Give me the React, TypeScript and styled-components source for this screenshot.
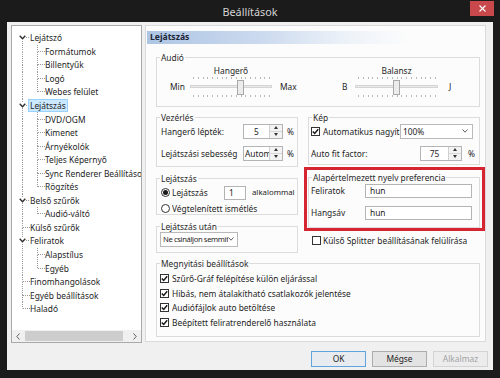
import React from 'react';
import styled, { createGlobalStyle, css } from 'styled-components';

const Global = createGlobalStyle`
  html, body { margin: 0; padding: 0; background: #1b1b1b; }
  #root { width: 500px; height: 378px; }
`;

const FONT = `"Noto Sans", "Open Sans", "DejaVu Sans", sans-serif`;

const Window = styled.div`
  width: 500px;
  height: 378px;
  background: #1b1b1b;
  display: flex;
  flex-direction: column;
  overflow: hidden;
  font-family: ${FONT};
  font-size: 8.4px;
  color: #1e1e1e;
`;

const TitleBar = styled.div`
  height: 22px;
  flex: none;
  display: grid;
  grid-template-columns: 1fr auto 1fr;
`;

const Title = styled.div`
  grid-column: 2;
  font-size: 10.8px;
  line-height: 22px;
  color: #d4d4d4;
  padding-top: 1px;
`;

const CloseBtn = styled.div`
  grid-column: 3;
  justify-self: end;
  margin: 1px 6px 0 0;
  width: 24px;
  height: 15px;
  background: #c9484b;
  color: #fff;
  display: flex;
  align-items: center;
  justify-content: center;
`;

const Body = styled.div`
  flex: none;
  height: 348px;
  margin: 0 7px;
  background: #f0f0f0;
  padding: 3px 7px 0 4px;
  box-sizing: border-box;
  display: flex;
  flex-direction: column;
`;

const Content = styled.div`
  display: flex;
  align-items: flex-start;
  gap: 3px;
`;

/* ---------- Tree ---------- */
const TreeBox = styled.div`
  width: 131px;
  height: 318px;
  flex: none;
  box-sizing: border-box;
  border: 1px solid #a9a9a9;
  background: #fff;
  display: flex;
  flex-direction: column;
  overflow: hidden;
`;

const TreeList = styled.div`
  flex: 1;
  padding: 5px 0 0 3px;
  overflow: hidden;
`;

const TreeRow = styled.div`
  display: flex;
  height: 13.55px;
  white-space: nowrap;
`;

const dotV = 'repeating-linear-gradient(to bottom, #9a9a9a 0 1px, transparent 1px 2px)';
const dotH = 'repeating-linear-gradient(to right, #9a9a9a 0 1px, transparent 1px 2px)';

type CellSpec = { t?: boolean; b?: boolean; h?: boolean; c?: boolean };

const Cell = styled.span<{ $t?: boolean; $b?: boolean; $h?: boolean; $c?: boolean }>`
  flex: none;
  width: 15px;
  display: flex;
  align-items: center;
  justify-content: center;
  background-repeat: no-repeat;
  ${({ $t, $b, $h, $c }) => {
    const imgs: string[] = [];
    const pos: string[] = [];
    const size: string[] = [];
    if ($t) { imgs.push(dotV); pos.push('7px 0'); size.push(`1px ${$c ? '3px' : '50%'}`); }
    if ($b) { imgs.push(dotV); pos.push('7px 100%'); size.push(`1px ${$c ? '4px' : '50%'}`); }
    if ($h) { imgs.push(dotH); pos.push(`${$c ? 11 : 8}px 50%`); size.push(`${$c ? 4 : 7}px 1px`); }
    if (!imgs.length) return css`background: none;`;
    return css`
      background-image: ${imgs.join(',')};
      background-position: ${pos.join(',')};
      background-size: ${size.join(',')};
    `;
  }}
`;

const TreeLabel = styled.span<{ $sel?: boolean }>`
  align-self: center;
  margin-left: -2px;
  padding: 0 1px;
  border: 1px solid transparent;
  line-height: 11px;
  ${({ $sel }) => $sel && css`
    background: #cce8ff;
    border-color: #99d1ff;
  `}
`;

const HScroll = styled.div`
  flex: none;
  height: 12px;
  display: flex;
  background: #f0f0f0;
`;

const ScrollArrow = styled.div`
  width: 12px;
  flex: none;
  display: flex;
  align-items: center;
  justify-content: center;
`;

const ScrollTrack = styled.div`
  flex: 1;
  display: flex;
  align-items: center;
`;

const ScrollThumb = styled.div`
  width: 98px;
  height: 10px;
  margin-left: 1px;
  background: #cdcdcd;
`;

const Chevron = () => (
  <svg width="7" height="5" viewBox="0 0 7 5">
    <polyline points="0.7,0.8 3.5,3.8 6.3,0.8" fill="none" stroke="#2a2a2a" strokeWidth="1.3" />
  </svg>
);

const F: CellSpec = { t: true, b: true };
const FH: CellSpec = { t: true, b: true, h: true };
const LH: CellSpec = { t: true, h: true };
const CT: CellSpec = { t: true, b: true, c: true, h: true };

const treeRows: { text: string; cells: CellSpec[]; sel?: boolean }[] = [
  { text: 'Lejátszó', cells: [{ b: true, c: true, h: true }] },
  { text: 'Formátumok', cells: [F, FH] },
  { text: 'Billentyűk', cells: [F, FH] },
  { text: 'Logó', cells: [F, FH] },
  { text: 'Webes felület', cells: [F, LH] },
  { text: 'Lejátszás', cells: [CT], sel: true },
  { text: 'DVD/OGM', cells: [F, FH] },
  { text: 'Kimenet', cells: [F, FH] },
  { text: 'Árnyékolók', cells: [F, FH] },
  { text: 'Teljes Képernyő', cells: [F, FH] },
  { text: 'Sync Renderer Beállítások', cells: [F, FH] },
  { text: 'Rögzítés', cells: [F, LH] },
  { text: 'Belső szűrők', cells: [CT] },
  { text: 'Audió-váltó', cells: [F, LH] },
  { text: 'Külső szűrők', cells: [FH] },
  { text: 'Feliratok', cells: [CT] },
  { text: 'Alapstílus', cells: [F, FH] },
  { text: 'Egyéb', cells: [F, LH] },
  { text: 'Finomhangolások', cells: [FH] },
  { text: 'Egyéb beállítások', cells: [FH] },
  { text: 'Haladó', cells: [LH] },
];

/* ---------- Right pane ---------- */
const Pane = styled.div`
  flex: 1;
  box-sizing: border-box;
  border: 1px solid #dadada;
  background: #fcfcfc;
  padding: 5px 5px 4px 10px;
`;

const Header = styled.div`
  height: 13px;
  margin: 0 -4px 0 -9px;
  padding-left: 3px;
  line-height: 13px;
  font-weight: bold;
  font-size: 8.6px;
  color: #1b2536;
  background: linear-gradient(to right, #adc5e4 0%, #cddbef 35%, #eef3f9 60%, #fcfcfc 78%);
`;

const Group = styled.div<{ $mt?: number; $pb?: number }>`
  border: 1px solid #dcdcdc;
  margin-top: ${({ $mt }) => $mt ?? 0}px;
  padding-bottom: ${({ $pb }) => $pb ?? 0}px;
`;

const Legend = styled.div`
  width: fit-content;
  margin: -5px 0 0 3px;
  padding: 0 1px;
  line-height: 10px;
  background: #fcfcfc;
  color: #2a2a2a;
`;

const SliderRow = styled.div`
  display: flex;
  padding-left: 13px;
  margin-top: 1.5px;
`;

const SliderUnit = styled.div<{ $l: number; $w: number; $r: number; $ml?: number }>`
  display: grid;
  grid-template-columns: ${({ $l, $w, $r }) => `${$l}px ${$w}px ${$r}px`};
  grid-template-rows: 11px 22px;
  margin-left: ${({ $ml }) => $ml ?? 0}px;
  align-items: center;
`;

const SliderTitle = styled.div`
  grid-column: 2;
  grid-row: 1;
  text-align: center;
  line-height: 11px;
`;

const SliderEnd = styled.div<{ $pl?: number }>`
  grid-row: 2;
  line-height: 11px;
  padding-left: ${({ $pl }) => $pl ?? 0}px;
`;

const Slider = ({ width, thumb }: { width: number; thumb: number }) => {
  const ticks = 17;
  return (
    <svg width={width} height={22} style={{ gridRow: 2, gridColumn: 2, display: 'block' }}>
      {Array.from({ length: ticks }).map((_, i) => {
        const x = Math.round(3 + (i * (width - 6)) / (ticks - 1)) + 0.5;
        return (
          <g key={i}>
            <line x1={x} x2={x} y1={1} y2={3} stroke="#b9b9b9" />
            <line x1={x} x2={x} y1={19} y2={21} stroke="#b9b9b9" />
          </g>
        );
      })}
      <rect x={0.5} y={9.5} width={width - 1} height={2} fill="#e9e9e9" stroke="#d5d5d5" />
      <rect x={thumb + 0.5} y={4.5} width={6} height={14} fill="#ececec" stroke="#a9a9a9" />
    </svg>
  );
};

const Columns = styled.div`
  display: grid;
  grid-template-columns: 142px 172px;
  column-gap: 10px;
  margin-top: 10px;
  align-items: start;
`;

const Column = styled.div`
  display: flex;
  flex-direction: column;
`;

const FormRow = styled.div<{ $cols: string; $mt?: number; $pl?: number }>`
  display: grid;
  grid-template-columns: ${({ $cols }) => $cols};
  align-items: center;
  margin-top: ${({ $mt }) => $mt ?? 0}px;
  padding-left: ${({ $pl }) => $pl ?? 0}px;
  line-height: 11px;
  white-space: nowrap;
`;

const Text = styled.span<{ $ml?: number; $fs?: number }>`
  margin-left: ${({ $ml }) => $ml ?? 0}px;
  ${({ $fs }) => $fs && css`font-size: ${$fs}px;`}
  overflow: hidden;
  white-space: nowrap;
`;

const Unit = styled.span<{ $pl?: number }>`
  padding-left: ${({ $pl }) => $pl ?? 0}px;
`;

const SpinBox = styled.div`
  display: flex;
  height: 15px;
  box-sizing: border-box;
  border: 1px solid #b4b4b4;
  background: #fff;
`;

const SpinValue = styled.div<{ $align?: string }>`
  flex: 1;
  min-width: 0;
  overflow: hidden;
  white-space: nowrap;
  text-align: ${({ $align }) => $align ?? 'center'};
  padding: 0 1px;
  line-height: 13px;
`;

const SpinButtons = styled.div`
  width: 12px;
  flex: none;
  display: flex;
  flex-direction: column;
  border-left: 1px solid #d0d0d0;
  background: #f3f3f3;
`;

const SpinHalf = styled.div<{ $down?: boolean }>`
  flex: 1;
  display: flex;
  align-items: center;
  justify-content: center;
  ${({ $down }) => $down && css`border-top: 1px solid #d6d6d6;`}
`;

const Tri = styled.span<{ $down?: boolean }>`
  width: 0;
  height: 0;
  border-left: 2.5px solid transparent;
  border-right: 2.5px solid transparent;
  ${({ $down }) => ($down ? css`border-top: 3px solid #333;` : css`border-bottom: 3px solid #333;`)}
`;

const Spinner = ({ value, align }: { value: string; align?: string }) => (
  <SpinBox>
    <SpinValue $align={align}>{value}</SpinValue>
    <SpinButtons>
      <SpinHalf><Tri /></SpinHalf>
      <SpinHalf $down><Tri $down /></SpinHalf>
    </SpinButtons>
  </SpinBox>
);

const Combo = styled.div<{ $tight?: boolean }>`
  display: flex;
  align-items: center;
  height: 15px;
  box-sizing: border-box;
  border: 1px solid #b9b9b9;
  background: #fff;
  padding: 0 4px 0 2px;
  line-height: 13px;
  ${({ $tight }) => $tight && css`
    font-size: 7.6px;
    letter-spacing: -0.35px;
    padding-right: 3px;
  `}
`;

const ComboText = styled.span`
  flex: 1;
  min-width: 0;
  overflow: hidden;
  white-space: nowrap;
`;

const ComboArrow = () => (
  <svg width="6" height="4" viewBox="0 0 6 4" style={{ flex: 'none' }}>
    <polyline points="0.5,0.5 3,3.2 5.5,0.5" fill="none" stroke="#606060" strokeWidth="1" />
  </svg>
);

const TextInput = styled.div`
  height: 14px;
  box-sizing: border-box;
  border: 1px solid #b4b4b4;
  background: #fff;
  padding: 0 4px;
  line-height: 12px;
  overflow: hidden;
`;

const Box = styled.span`
  width: 9px;
  height: 9px;
  box-sizing: border-box;
  border: 1px solid #333;
  background: #fff;
  display: flex;
  align-items: center;
  justify-content: center;
  flex: none;
`;

const Check = ({ on }: { on?: boolean }) => (
  <Box>
    {on && (
      <svg width="7" height="7" viewBox="0 0 7 7">
        <polyline points="0.8,3.4 2.7,5.4 6.2,1.2" fill="none" stroke="#1a1a1a" strokeWidth="1.5" />
      </svg>
    )}
  </Box>
);

const RadioRing = styled.span`
  width: 9px;
  height: 9px;
  box-sizing: border-box;
  border: 1px solid #333;
  border-radius: 50%;
  background: #fff;
  display: flex;
  align-items: center;
  justify-content: center;
`;

const RadioDot = styled.span`
  width: 5px;
  height: 5px;
  border-radius: 50%;
  background: #1a1a1a;
`;

const Radio = ({ on }: { on?: boolean }) => <RadioRing>{on && <RadioDot />}</RadioRing>;

const RedFrame = styled.div`
  margin: 2px -5px 0 -4px;
  border: 3px solid #d42530;
  padding: 7px 2px 0 1px;
`;

const CheckList = styled.div`
  display: flex;
  flex-direction: column;
  padding: 3px 0 6px 3px;
`;

const CheckItem = styled.div`
  display: flex;
  align-items: center;
  height: 14.5px;
  white-space: nowrap;
`;

/* ---------- Footer ---------- */
const Footer = styled.div`
  display: flex;
  justify-content: flex-end;
  gap: 6px;
  padding-top: 8px;
  margin-right: -2px;
`;

const Button = styled.div<{ $kind?: 'default' | 'normal' | 'disabled' }>`
  width: 55px;
  height: 16px;
  box-sizing: border-box;
  text-align: center;
  line-height: 14px;
  border: 1px solid #adadad;
  background: #e3e3e3;
  ${({ $kind }) => $kind === 'default' && css`
    border-color: #5fa3df;
    background: #e8ecf0;
  `}
  ${({ $kind }) => $kind === 'disabled' && css`
    border-color: #d3d3d3;
    background: #ececec;
    color: #a3a3a3;
  `}
`;

export default function App() {
  return (
    <Window>
      <Global />
      <TitleBar>
        <Title>Beállítások</Title>
        <CloseBtn>
          <svg width="7" height="7" viewBox="0 0 7 7">
            <path d="M0.5 0.5 L6.5 6.5 M6.5 0.5 L0.5 6.5" stroke="#fff" strokeWidth="1.1" />
          </svg>
        </CloseBtn>
      </TitleBar>
      <Body>
        <Content>
          <TreeBox>
            <TreeList>
              {treeRows.map((r, i) => (
                <TreeRow key={i}>
                  {r.cells.map((c, j) => (
                    <Cell key={j} $t={c.t} $b={c.b} $h={c.h} $c={c.c}>
                      {c.c && <Chevron />}
                    </Cell>
                  ))}
                  <TreeLabel $sel={r.sel}>{r.text}</TreeLabel>
                </TreeRow>
              ))}
            </TreeList>
            <HScroll>
              <ScrollArrow>
                <svg width="4" height="7" viewBox="0 0 4 7">
                  <polyline points="3.5,0.5 0.8,3.5 3.5,6.5" fill="none" stroke="#606060" strokeWidth="1" />
                </svg>
              </ScrollArrow>
              <ScrollTrack>
                <ScrollThumb />
              </ScrollTrack>
              <ScrollArrow>
                <svg width="4" height="7" viewBox="0 0 4 7">
                  <polyline points="0.5,0.5 3.2,3.5 0.5,6.5" fill="none" stroke="#606060" strokeWidth="1" />
                </svg>
              </ScrollArrow>
            </HScroll>
          </TreeBox>

          <Pane>
            <Header>Lejátszás</Header>

            <Group $mt={13} $pb={8}>
              <Legend>Audió</Legend>
              <SliderRow>
                <SliderUnit $l={20} $w={82} $r={30}>
                  <SliderTitle>Hangerő</SliderTitle>
                  <SliderEnd>Min</SliderEnd>
                  <Slider width={82} thumb={47} />
                  <SliderEnd $pl={8}>Max</SliderEnd>
                </SliderUnit>
                <SliderUnit $l={13} $w={83} $r={20} $ml={40}>
                  <SliderTitle>Balansz</SliderTitle>
                  <SliderEnd>B</SliderEnd>
                  <Slider width={83} thumb={38} />
                  <SliderEnd $pl={11}>J</SliderEnd>
                </SliderUnit>
              </SliderRow>
            </Group>

            <Columns>
              <Column>
                <Group $pb={5}>
                  <Legend>Vezérlés</Legend>
                  <FormRow $cols="82px 40px 14px" $pl={4} $mt={1}>
                    <Text>Hangerő lépték:</Text>
                    <Spinner value="5" />
                    <Unit $pl={4}>%</Unit>
                  </FormRow>
                  <FormRow $cols="82px 40px 14px" $pl={4} $mt={7}>
                    <Text>Lejátszási sebesség</Text>
                    <Spinner value="Autom" align="left" />
                    <Unit $pl={4}>%</Unit>
                  </FormRow>
                </Group>

                <Group $mt={11}>
                  <Legend>Lejátszás</Legend>
                  <FormRow $cols="9px 54px 22px auto" $pl={4} $mt={2}>
                    <Radio on />
                    <Text $ml={2}>Lejátszás</Text>
                    <TextInput>1</TextInput>
                    <Text $ml={6} $fs={7.8}>alkalommal</Text>
                  </FormRow>
                  <FormRow $cols="9px auto" $pl={4} $mt={3}>
                    <Radio />
                    <Text $ml={2}>Végtelenített ismétlés</Text>
                  </FormRow>
                </Group>

                <Group $mt={11} $pb={5}>
                  <Legend>Lejátszás után</Legend>
                  <FormRow $cols="78px" $pl={3}>
                    <Combo $tight>
                      <ComboText>Ne csináljon semmit</ComboText>
                      <ComboArrow />
                    </Combo>
                  </FormRow>
                </Group>
              </Column>

              <Column>
                <Group $pb={3}>
                  <Legend>Kép</Legend>
                  <FormRow $cols="9px 80px 73px" $pl={2} $mt={1}>
                    <Check on />
                    <Text $ml={3}>Automatikus nagyítá</Text>
                    <Combo>
                      <ComboText>100%</ComboText>
                      <ComboArrow />
                    </Combo>
                  </FormRow>
                  <FormRow $cols="109px 42px 12px" $pl={2} $mt={7}>
                    <Text>Auto fit factor:</Text>
                    <Spinner value="75" />
                    <Unit $pl={6}>%</Unit>
                  </FormRow>
                </Group>

                <RedFrame>
                  <Group $pb={7}>
                    <Legend>Alapértelmezett nyelv preferencia</Legend>
                    <FormRow $cols="54px 107px" $pl={2} $mt={1}>
                      <Text>Feliratok</Text>
                      <TextInput>hun</TextInput>
                    </FormRow>
                    <FormRow $cols="54px 107px" $pl={2} $mt={8}>
                      <Text>Hangsáv</Text>
                      <TextInput>hun</TextInput>
                    </FormRow>
                  </Group>
                </RedFrame>

                <FormRow $cols="9px auto" $pl={4} $mt={4}>
                  <Check />
                  <Text $ml={2}>Külső Splitter beállításának felülírása</Text>
                </FormRow>
              </Column>
            </Columns>

            <Group $mt={10}>
              <Legend>Megnyitási beállítások</Legend>
              <CheckList>
                {[
                  'Szűrő-Gráf felépítése külön eljárással',
                  'Hibás, nem átalakítható csatlakozók jelentése',
                  'Audiófájlok auto betöltése',
                  'Beépített feliratrenderelő használata',
                ].map((t) => (
                  <CheckItem key={t}>
                    <Check on />
                    <Text $ml={3}>{t}</Text>
                  </CheckItem>
                ))}
              </CheckList>
            </Group>
          </Pane>
        </Content>

        <Footer>
          <Button $kind="default">OK</Button>
          <Button $kind="normal">Mégse</Button>
          <Button $kind="disabled">Alkalmaz</Button>
        </Footer>
      </Body>
    </Window>
  );
}
